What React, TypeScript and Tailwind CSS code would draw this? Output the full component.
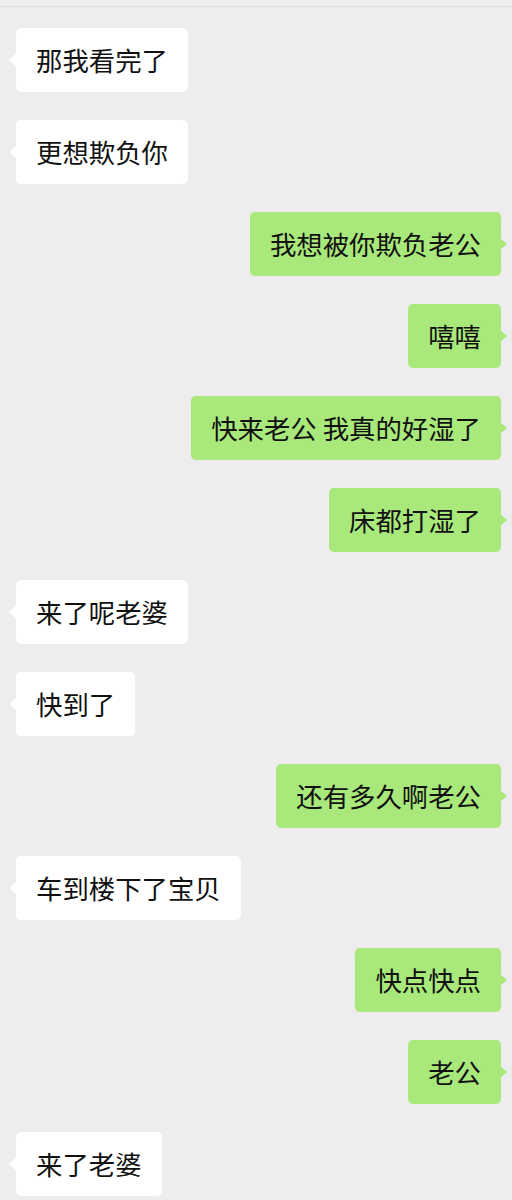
const messages: { me: boolean; text: string }[] = [
  { me: false, text: '那我看完了' },
  { me: false, text: '更想欺负你' },
  { me: true, text: '我想被你欺负老公' },
  { me: true, text: '嘻嘻' },
  { me: true, text: '快来老公 我真的好湿了' },
  { me: true, text: '床都打湿了' },
  { me: false, text: '来了呢老婆' },
  { me: false, text: '快到了' },
  { me: true, text: '还有多久啊老公' },
  { me: false, text: '车到楼下了宝贝' },
  { me: true, text: '快点快点' },
  { me: true, text: '老公' },
  { me: false, text: '来了老婆' },
]

const Bubble = ({ me, text }: { me: boolean; text: string }) => {
  return (
    <div className={me ? 'flex justify-end pr-[11px]' : 'flex justify-start pl-4'}>
      <div
        className={
          me
            ? 'relative h-16 flex items-center px-5 rounded-[5px] bg-[#a9e87b]'
            : 'relative h-16 flex items-center px-5 rounded-[5px] bg-white'
        }
      >
        {me ? (
          <div className="absolute top-1/2 -translate-y-1/2 right-[-6px] w-0 h-0 border-y-[6px] border-y-transparent border-l-[7px] border-l-[#a9e87b]" />
        ) : (
          <div className="absolute top-1/2 -translate-y-1/2 left-[-7px] w-0 h-0 border-y-[6px] border-y-transparent border-r-[7px] border-r-white" />
        )}
        <span className="text-[26.4px] leading-none text-[#111111] whitespace-pre">{text}</span>
      </div>
    </div>
  )
}

export default function App() {
  return (
    <div
      className="w-[512px] h-[1200px] overflow-hidden bg-[#ededed]"
      style={{ fontFamily: '"Noto Sans CJK SC", "Noto Sans", sans-serif' }}
    >
      <div className="h-[7px] border-b border-[#dedede] bg-[#efefef]" />
      <div className="flex flex-col gap-7 pt-[21px]">
        {messages.map((m, i) => (
          <Bubble key={i} me={m.me} text={m.text} />
        ))}
      </div>
    </div>
  )
}
